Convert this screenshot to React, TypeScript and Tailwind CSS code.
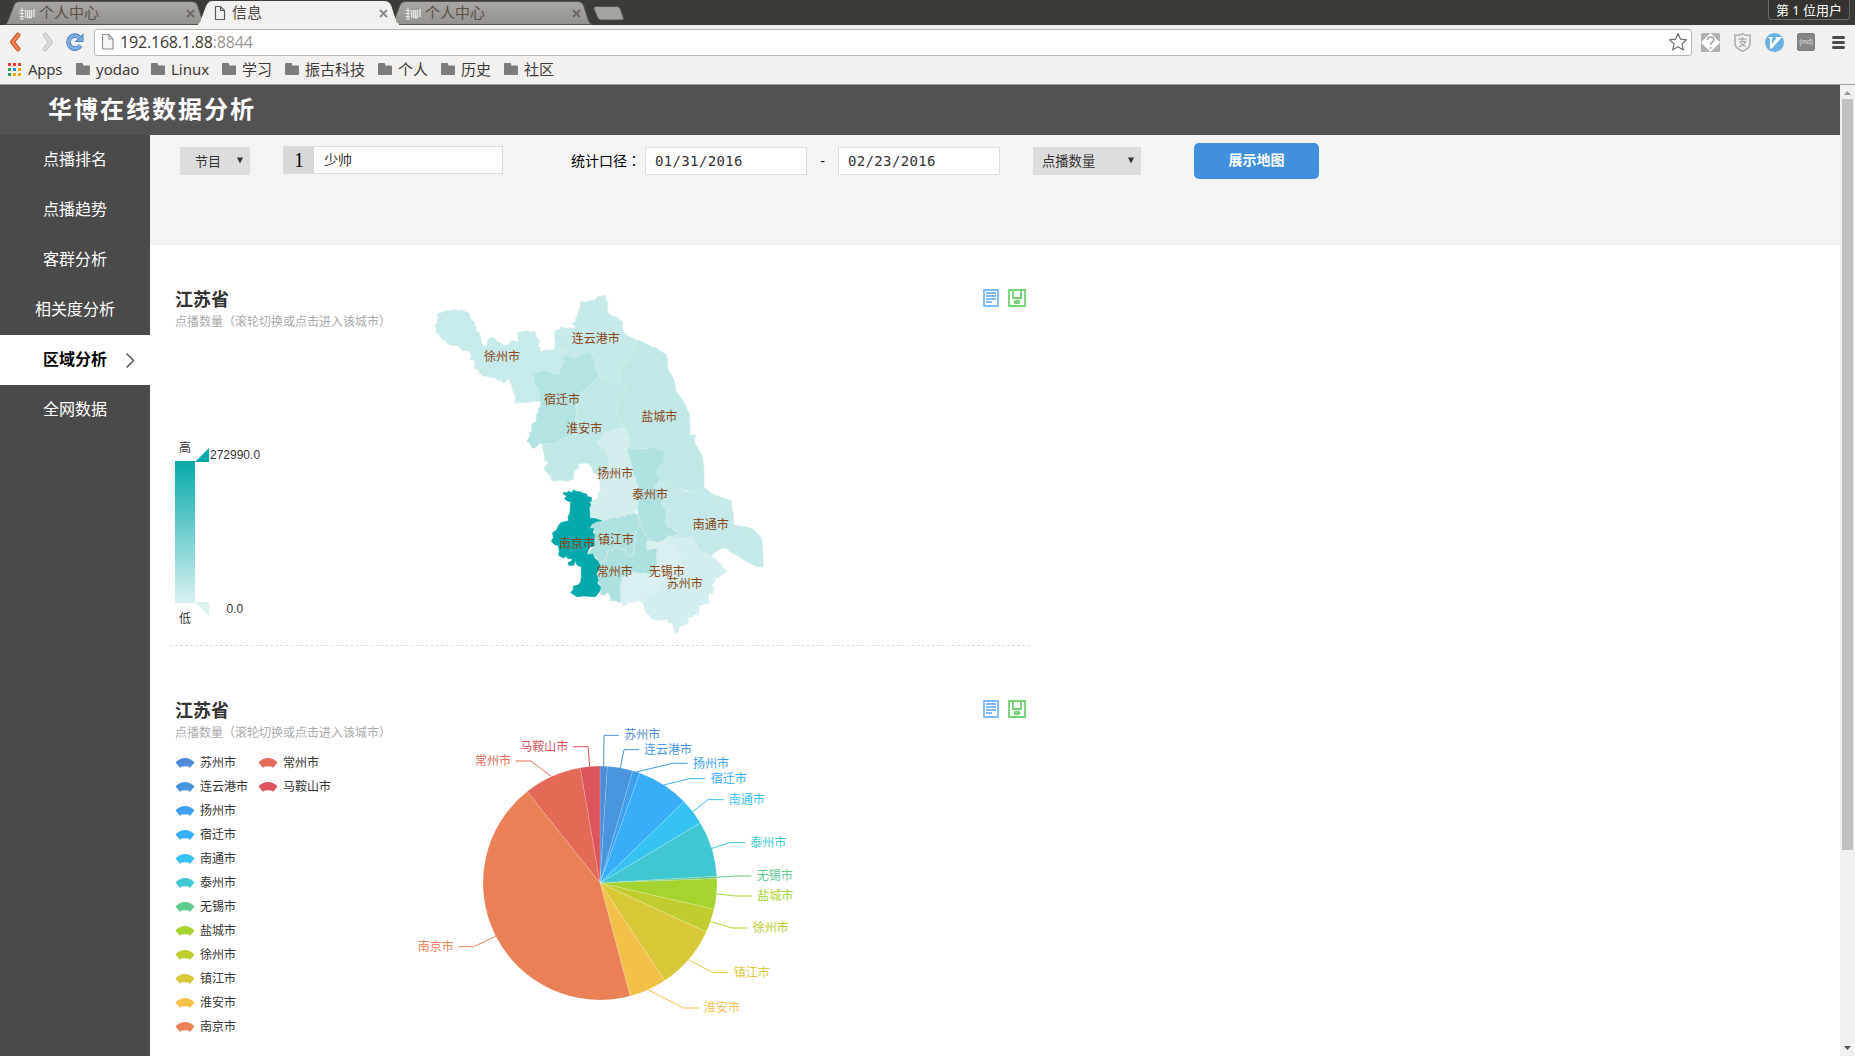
import React from 'react';

type Region = { fill: string; d: string };

const regions: Region[] = [
  { fill: '#c7ebea', d: 'M46,154 50,150 46,134 52,128 54,100 64,98 78,92 90,92 102,88 116,92 124,88 132,93 148,100 150,112 155,122 163,124 163,134 169,142 168,154 178,158 181,170 184,180 186,190 190,200 202,196 202,184 206,176 216,171 226,176 232,186 242,188 250,196 266,194 272,184 278,182 294,186 294,156 308,156 318,152 334,156 344,154 348,158 346,166 354,176 360,184 354,196 360,204 362,216 376,210 390,210 404,208 420,208 432,210 444,206 446,214 442,222 430,230 430,246 424,262 418,266 416,282 398,282 392,276 366,270 350,276 334,274 338,290 342,300 340,312 346,318 356,322 350,332 356,336 360,346 356,352 362,364 340,364 320,368 300,368 286,371 286,346 280,336 274,316 270,304 262,296 258,306 250,308 240,298 236,304 226,294 210,292 200,288 190,290 184,284 172,268 160,264 166,252 162,240 150,238 154,226 150,216 152,210 144,216 136,210 130,214 120,206 112,196 94,196 84,192 76,182 66,178 60,168Z' },
  { fill: '#c5eae9', d: 'M444,206 432,210 420,208 404,208 406,190 404,172 404,156 412,150 420,148 422,142 430,142 442,146 450,144 460,146 466,140 458,132 458,128 468,126 466,116 474,104 474,96 480,84 482,66 500,66 510,62 526,60 532,50 544,48 552,46 558,50 556,58 564,66 562,82 564,100 574,106 590,112 600,120 608,126 608,142 611,158 624,168 638,174 650,180 644,196 640,222 618,248 598,264 606,280 600,298 584,308 572,300 550,298 536,288 534,272 526,266 528,252 524,246 520,230 516,222 512,212 504,212 500,220 486,218 474,232 456,232 442,222Z' },
  { fill: '#b3e4e3', d: 'M442,222 456,232 474,232 486,218 500,220 504,212 512,212 516,222 520,230 524,246 528,252 526,266 534,272 536,288 518,312 500,326 480,340 474,366 468,380 470,400 466,420 470,440 462,466 430,474 404,494 380,490 368,494 360,490 350,500 340,506 334,502 328,490 320,484 330,466 326,458 336,456 334,432 348,424 350,400 356,396 354,386 360,380 362,364 356,352 360,346 356,336 350,332 356,322 346,318 340,312 342,300 338,290 334,274 350,276 366,270 392,276 398,282 416,282 418,266 424,262 430,246 430,230Z' },
  { fill: '#bfe8e7', d: 'M536,288 550,298 572,300 584,308 600,298 604,308 616,322 612,334 604,345 594,358 588,378 590,405 600,420 602,432 612,442 596,444 576,450 550,460 545,475 530,486 536,498 548,502 556,510 558,522 564,530 564,560 562,576 532,582 520,578 514,560 506,550 490,550 474,552 478,562 462,574 460,600 452,598 446,604 420,600 408,604 396,602 392,592 386,582 374,572 374,560 384,552 382,544 374,542 374,524 370,516 368,494 380,490 404,494 430,474 462,466 470,440 466,420 470,400 468,380 474,366 480,340 500,326 518,312Z' },
  { fill: '#bfe8e7', d: 'M650,180 664,184 680,192 694,200 710,204 726,216 740,224 742,240 744,268 756,288 764,304 768,332 780,350 794,370 802,390 808,400 810,430 810,466 816,464 828,466 824,478 826,492 840,514 848,532 852,570 852,622 840,628 826,634 800,632 780,624 762,628 750,614 744,608 718,610 712,596 712,580 716,560 732,550 732,510 712,508 700,500 680,506 660,506 638,510 628,496 630,480 622,462 612,442 602,432 600,420 590,405 588,378 594,358 604,345 612,334 616,322 604,308 600,298 606,280 598,264 618,248 640,222 644,196Z' },
  { fill: '#d3eeed', d: 'M612,442 614,452 624,452 624,466 630,480 628,496 622,512 630,540 636,560 640,584 648,590 648,606 656,620 652,640 656,656 652,680 644,698 630,704 618,704 614,712 604,706 600,714 580,712 556,720 544,722 528,716 514,716 510,700 512,684 508,662 518,660 532,658 536,648 534,640 542,634 540,610 538,594 530,582 562,576 564,560 564,530 558,522 556,510 548,502 536,498 530,486 545,475 550,460 576,450 596,444Z' },
  { fill: '#b0e2e2', d: 'M628,496 638,510 660,506 680,506 700,500 712,508 732,510 732,550 716,560 712,580 718,596 714,610 704,616 704,626 724,628 728,650 724,670 738,686 740,706 736,720 742,730 742,740 756,742 764,752 778,764 762,768 745,768 730,782 710,788 690,782 672,758 662,730 654,706 652,680 656,656 652,640 656,620 648,606 648,590 640,584 636,560 630,540 622,512Z' },
  { fill: '#c5e9e8', d: 'M704,626 704,616 718,610 738,606 750,614 762,628 780,624 800,636 812,632 826,634 840,628 852,622 866,632 880,644 910,654 934,662 936,684 940,700 940,734 956,738 976,740 996,746 1010,758 1024,774 1028,800 1030,862 1008,860 990,850 970,840 950,826 930,816 918,804 908,804 890,812 874,828 856,820 836,808 828,784 820,770 778,774 745,768 762,768 778,764 764,752 756,742 742,740 742,730 736,720 740,706 738,686 724,670 728,650 724,628Z' },
  { fill: '#d3eeee', d: 'M745,768 778,774 820,770 828,784 836,808 856,820 874,828 886,838 900,850 908,862 920,876 906,884 896,892 884,892 886,902 874,914 880,924 878,940 868,938 864,948 866,970 852,970 846,976 832,974 838,984 834,1006 822,1002 818,1010 800,1012 806,1022 802,1032 788,1036 778,1040 774,1056 768,1062 762,1050 758,1030 744,1028 742,1016 732,1020 720,1020 698,1018 688,1006 676,994 674,980 668,966 672,950 690,946 715,930 730,912 740,900 770,870 782,850 782,820 770,798 750,786Z' },
  { fill: '#daf0f0', d: 'M680,782 710,788 730,782 745,768 750,786 770,798 782,820 782,850 770,870 740,900 730,912 715,930 690,946 672,950 668,966 650,964 640,968 626,966 620,974 608,976 598,966 600,920 606,900 604,892 620,888 640,876 660,880 676,878 690,884 688,904 686,918 690,926 698,924 690,908 700,888 704,870 712,850 708,830 712,806 694,806 680,812Z' },
  { fill: '#daf0f0', d: 'M689,902 698,888 706,884 712,904 704,924 690,930 685,918Z' },
  { fill: '#aee2e1', d: 'M544,722 556,720 580,712 600,714 604,706 614,712 618,704 630,704 644,698 654,706 662,730 644,764 648,780 642,796 644,816 636,832 630,826 620,826 616,810 600,808 590,800 576,812 560,812 564,824 556,834 560,846 540,854 530,834 518,824 500,825 520,800 524,775 522,746 508,745 520,730Z' },
  { fill: '#ade1e0', d: 'M654,706 662,730 672,758 690,782 680,782 680,812 694,806 712,806 708,830 712,850 700,870 696,886 676,878 660,880 640,876 620,888 604,892 606,900 600,920 602,970 588,962 572,962 570,950 564,938 552,946 540,942 542,922 532,900 540,870 536,846 560,846 556,834 564,824 560,812 576,812 590,800 600,808 616,810 620,826 630,826 636,832 644,816 642,796 648,780 644,764 656,740Z' },
  { fill: '#06a9ab', d: 'M430,638 440,638 446,634 456,638 460,630 468,634 482,636 490,640 500,642 502,650 514,652 514,664 508,664 512,676 508,684 510,715 526,716 545,722 528,726 516,732 508,745 522,746 518,756 524,766 522,780 524,796 508,802 504,814 500,825 518,822 522,832 534,844 540,856 536,872 530,880 534,900 532,910 542,922 538,936 526,950 490,948 470,950 462,944 452,938 460,928 460,918 474,916 482,906 484,890 484,860 472,856 466,844 460,856 446,856 444,848 456,842 456,836 444,836 438,828 430,834 416,826 418,812 414,796 404,794 394,784 400,774 398,758 410,750 416,736 422,728 440,724 446,722 444,710 450,700 452,665 440,662 434,656 440,648 430,642Z' },
];

const mapLabels: [string, number, number][] = [
  ['徐州市', 192, 231], ['连云港市', 455, 177], ['宿迁市', 372, 360], ['淮安市', 439, 446], ['盐城市', 664, 411],
  ['扬州市', 532, 582], ['泰州市', 636, 645], ['南通市', 818, 734], ['南京市', 417, 792], ['镇江市', 534, 780],
  ['常州市', 530, 876], ['无锡市', 686, 876], ['苏州市', 740, 912],
];

type Slice = { name: string; color: string; end: number; line: string; x: number; y: number };

const slices: Slice[] = [
  { name: '苏州市', color: '#4f8bd6', end: 3.6, line: '611,169 612,76 657,76', x: 673, y: 75 },
  { name: '连云港市', color: '#4895dd', end: 16.3, line: '661,174 672,119 717,119', x: 732, y: 119 },
  { name: '扬州市', color: '#3d9fed', end: 19.9, line: '709,186 817,160 863,160', x: 879, y: 161 },
  { name: '宿迁市', color: '#38adf8', end: 45.9, line: '791,225 870,206 916,206', x: 932, y: 207 },
  { name: '南通市', color: '#36c3f1', end: 59.1, line: '878,305 924,269 971,269', x: 986, y: 269 },
  { name: '泰州市', color: '#40c7d2', end: 86.7, line: '936,415 989,398 1035,398', x: 1051, y: 398 },
  { name: '无锡市', color: '#61cb8f', end: 87.8, line: '950,502 1008,498 1054,498', x: 1070, y: 498 },
  { name: '盐城市', color: '#a5d330', end: 103, line: '950,552 1009,558 1055,558', x: 1072, y: 558 },
  { name: '徐州市', color: '#c1cd2f', end: 114.7, line: '932,635 996,654 1042,654', x: 1058, y: 654 },
  { name: '镇江市', color: '#d9c939', end: 146.4, line: '867,750 939,788 985,788', x: 1001, y: 788 },
  { name: '淮安市', color: '#f3c14a', end: 165.1, line: '744,839 850,894 896,894', x: 912, y: 894 },
  { name: '南京市', color: '#ea8055', end: 321.5, line: '287,679 221,710 175,710', x: 53, y: 711 },
  { name: '常州市', color: '#e36a57', end: 350.3, line: '454,199 393,153 347,153', x: 225, y: 153 },
  { name: '马鞍山市', color: '#dc545c', end: 360, line: '569,170 564,110 519,110', x: 361, y: 111 },
];

const point = (deg: number) => {
  const a = (deg * Math.PI) / 180;
  return `${200 + 117 * Math.sin(a)},${173 - 117 * Math.cos(a)}`;
};

function wedge(i: number) {
  const start = i === 0 ? 0 : slices[i - 1].end;
  const end = slices[i].end;
  return `M200,173 L${point(start)} A117,117 0 ${end - start > 180 ? 1 : 0} 1 ${point(end)} Z`;
}

function Tab({ title, active, wave }: { title: string; active?: boolean; wave?: boolean }) {
  return (
    <div className="relative -mr-[8px] h-[25px] w-[201px] shrink-0">
      <svg className="absolute inset-0" width="201" height="25" viewBox="0 0 201 25">
        <defs>
          <linearGradient id="tabGrey" x1="0" y1="0" x2="0" y2="1">
            <stop offset="0" stopColor="#a9a7a3" />
            <stop offset="1" stopColor="#94928f" />
          </linearGradient>
        </defs>
        <path
          d="M0,24.5 C2,24 3,21 4,18 L9,5 Q10.500,1.500 14,1.500 L187,1.500 Q191,1.500 192.500,5 L197,19 Q198,23.500 201,24.500 Z"
          fill={active ? '#f2f1f0' : 'url(#tabGrey)'}
          stroke={active ? '#f2f1f0' : '#55524c'}
          strokeWidth="1"
        />
      </svg>
      <div className="relative flex h-[25px] items-center pr-[10px] pl-[14px]">
        {wave ? (
          <svg width="16" height="16" viewBox="0 0 16 16" stroke="#e4e2df" fill="none">
            <path d="M.5 5.500h5M0 8.500h5M.5 11.500h4.500M1 14h4" strokeWidth="1" />
            <path d="M3 2.500v12M6.500 5v8" strokeWidth="1.300" />
            <path d="M8.500 5v7q1 1.500 2 0V5M10.500 12q1 1.500 2 0V5M15 4v8" strokeWidth="1.500" />
          </svg>
        ) : (
          <svg width="16" height="16" viewBox="0 0 16 16" fill="none" stroke="#5b5b5b" strokeWidth="1.2">
            <path d="M3.500 1.500h5l4 4v9h-9zM8.500 1.500v4h4" />
          </svg>
        )}
        <span className={`ml-[4px] flex-1 text-[15px] leading-[23px] ${active ? 'text-[#4a4742]' : 'text-[#5f5147]'}`}>{title}</span>
        <svg width="9" height="9" viewBox="0 0 9 9" className="mt-[2px] mr-[1px]" stroke={active ? '#8a8784' : '#6c6966'} strokeWidth="1.8">
          <path d="M1 1l7 7M8 1l-7 7" />
        </svg>
      </div>
    </div>
  );
}

function TabStrip() {
  return (
    <div className="flex h-[25px] items-start bg-[#3c3b37] pl-[5px]">
      <Tab title="个人中心" wave />
      <div className="relative z-10"><Tab title="信息" active /></div>
      <Tab title="个人中心" wave />
      <svg width="32" height="25" viewBox="0 0 32 25" className="ml-[9px]">
        <path d="M2 6.500h22q2.500 0 3.500 2.500l3 9q.5 2-1.500 2H8q-2.500 0-3.500-2.500L1 9q-.7-2.500 1-2.500z" fill="#a5a39f" stroke="#55524c" />
      </svg>
      <div className="mr-[5px] ml-auto flex h-[20px] w-[82px] items-center justify-center rounded-b-[4px] border border-t-0 border-[#6d6b66] bg-[#34332f] pt-[2px] font-['Noto_Sans','Noto_Sans_CJK_SC',sans-serif] text-[13px] whitespace-pre text-white">第 1 位用户</div>
    </div>
  );
}

function AddressBar() {
  return (
    <div className="flex h-[33px] items-center bg-[#f2f1f0] pt-[1px] pl-[8px]">
      <svg width="16" height="20" viewBox="0 0 16 20" fill="none" strokeLinecap="round" strokeLinejoin="round">
        <path d="M10 3L4.500 10l5.500 7" stroke="#b8502a" strokeWidth="4.600" />
        <path d="M10 3L4.500 10l5.500 7" stroke="#f58550" strokeWidth="2.800" />
      </svg>
      <svg width="16" height="20" viewBox="0 0 16 20" className="ml-[16px]" fill="none" strokeLinecap="round" strokeLinejoin="round">
        <path d="M5 3l5.500 7L5 17" stroke="#c4c2c0" strokeWidth="4.600" />
        <path d="M5 3l5.500 7L5 17" stroke="#dddbd9" strokeWidth="2.800" />
      </svg>
      <svg width="18" height="20" viewBox="0 0 18 20" className="ml-[10px]" fill="none">
        <path d="M14.500 13.500A6.500 6.500 0 1 1 13 5" stroke="#4f86bf" strokeWidth="4.600" />
        <path d="M17.500 1v9h-9z" fill="#4f86bf" />
        <path d="M14 13.500A6.300 6.300 0 1 1 13 5.500" stroke="#79aee0" strokeWidth="2.800" />
        <path d="M16.500 3.500v5.500h-5.500z" fill="#79aee0" />
      </svg>
      <div className="ml-[10px] flex h-[27px] w-[1598px] items-center rounded-[3px] border border-[#b9b6b2] bg-white pr-[3px] pl-[6px]">
        <svg width="14" height="18" viewBox="0 0 14 18" fill="#f6f6f6" stroke="#8f8f8f" strokeWidth="1.100">
          <path d="M1.500 1.500h6.500l4 4.500v10h-10.500zM8 1.500v4.500h4" />
        </svg>
        <span className="ml-[5px] flex-1 font-['Open_Sans',sans-serif] text-[16px] leading-[24px] tracking-[-0.180px] text-[#3a3632]">192.168.1.88<span className="text-[#9a9794]">:8844</span></span>
        <svg width="20" height="20" viewBox="0 0 20 20" fill="#fff" stroke="#706d6a" strokeWidth="1.200" strokeLinejoin="round">
          <path d="M10 1.500l2.500 5.700 6.100.6-4.600 4.100 1.300 6-5.300-3.100-5.300 3.100 1.300-6L1.400 7.800l6.100-.6z" />
        </svg>
      </div>
      <svg width="19" height="19" viewBox="0 0 19 19" className="ml-[9px]">
        <rect width="19" height="19" rx="1.500" fill="#b2b1b0" />
        <path d="M9.500 0L19 9.500 9.500 19 0 9.500z" fill="#fff" />
        <path d="M6.500 7q0-3 3.200-3t3 2.800q0 1.700-1.700 2.500-1.300.7-1.300 2.700M9.700 14v1.800" fill="none" stroke="#a5a4a3" strokeWidth="1.600" />
      </svg>
      <svg width="17" height="19" viewBox="0 0 17 19" className="ml-[14px]">
        <path d="M1 2q4 1 7.500-1.200Q12 3 16 2v9q0 4-7.500 7.200Q1 15 1 11z" fill="#f2f1f0" stroke="#b5b3b1" strokeWidth="1.700" />
        <path d="M4.500 6.200h8M8.500 4v4.500M5.500 8.700h6q-1.500 3.800-6.500 5M6 9.500q2.500 3.500 6 4" fill="none" stroke="#aaa8a6" strokeWidth="1.200" />
      </svg>
      <svg width="19" height="19" viewBox="0 0 19 19" className="ml-[14px]">
        <circle cx="9.500" cy="9.500" r="9.500" fill="#68b1e1" />
        <path d="M3.500 4h4.200v1.200h-.9v5.600L11.500 5.200h-1V4H17q-.2 1-1 1.200L7 15.500H5V5.200H3.500z" fill="#fff" />
      </svg>
      <div className="ml-[13px] flex h-[18px] w-[18px] items-center justify-center rounded-[2px] border border-[#7c7c7c] bg-[#868686] font-['Liberation_Sans',sans-serif] text-[7px] tracking-[-0.200px] text-[#dedede]">(md)</div>
      <div className="ml-[17px] flex w-[13px] flex-col gap-[2px]">
        <div className="h-[3px] rounded-full bg-[#4a4a4a]" />
        <div className="h-[3px] rounded-full bg-[#4a4a4a]" />
        <div className="h-[3px] rounded-full bg-[#4a4a4a]" />
      </div>
    </div>
  );
}

const dots = ['#ef3a36', '#ef3a36', '#ef3a36', '#2fa05a', '#2a8af0', '#f5a90e', '#2fa05a', '#f5a90e', '#f5a90e'];

const bookmarks: [string, string][] = [
  ['yodao', 'w-[43px]'], ['Linux', 'w-[39px]'], ['学习', 'w-[31px]'], ['振古科技', 'w-[61px]'],
  ['个人', 'w-[31px]'], ['历史', 'w-[31px]'], ['社区', 'w-[31px]'],
];

function Bookmarks() {
  return (
    <div className="flex h-[27px] items-center border-b border-[#a3a19f] bg-[#f2f1f0] pb-[4px] pl-[8px] font-['Noto_Sans','Noto_Sans_CJK_SC',sans-serif] text-[15px] leading-[22px] text-[#3c3a37]">
      <div className="grid grid-cols-3 gap-[2px]">
        {dots.map((c, i) => (
          <div key={i} className="h-[3px] w-[3px]" style={{ background: c }} />
        ))}
      </div>
      <span className="ml-[7px] w-[48px] tracking-[-0.300px]">Apps</span>
      {bookmarks.map(([name, w]) => (
        <div key={name} className="mr-[12px] flex items-center gap-[6px] whitespace-nowrap">
          <svg width="14" height="12" viewBox="0 0 14 12" fill="#7e7c7a"><path d="M0 1Q0 0 1 0h5q.8 0 1 .8L7.300 2.500H13q1 0 1 1V11q0 1-1 1H1q-1 0-1-1z" /></svg>
          <span className={w}>{name}</span>
        </div>
      ))}
    </div>
  );
}

const menu = ['点播排名', '点播趋势', '客群分析', '相关度分析', '区域分析', '全网数据'];

function Sidebar() {
  return (
    <nav className="w-[150px] shrink-0 bg-[#4a4a4a] text-[16px] text-white">
      {menu.map((item) =>
        item === '区域分析' ? (
          <div key={item} className="relative flex h-[50px] items-center justify-center bg-white pb-[1px] font-bold text-black">
            {item}
            <svg className="absolute top-[17px] right-[15px]" width="10" height="17" viewBox="0 0 10 17" fill="none" stroke="#555" strokeWidth="1.500"><path d="M1.500 1.500l7 7-7 7" /></svg>
          </div>
        ) : (
          <div key={item} className="flex h-[50px] items-center justify-center pb-[1px]">{item}</div>
        ),
      )}
    </nav>
  );
}

function Caret() {
  return (
    <svg width="6" height="7" viewBox="0 0 6 7" className="mb-[3px]" fill="#333"><path d="M0 .5h6L3 6.500z" /></svg>
  );
}

function Filters() {
  return (
    <div className="flex h-[110px] items-start bg-[#f4f4f4] pl-[30px] text-[#333]">
      <div className="mt-[12px] flex h-[28px] w-[70px] items-center bg-[#ddd] pt-[2px] pr-[7px] pl-[15px] text-[13px]">
        <span className="flex-1">节目</span>
        <Caret />
      </div>
      <div className="mt-[11px] ml-[33px] flex h-[28px] w-[220px] border border-[#ddd] bg-white">
        <div className="flex w-[30px] items-center justify-center bg-[#d8d8d8] font-['Liberation_Serif',serif] text-[20px] text-black">1</div>
        <div className="flex items-center pt-[1px] pl-[10px] text-[14px]">少帅</div>
      </div>
      <div className="mt-[12px] ml-[68px] flex h-[28px] w-[74px] items-center pb-[1px] font-['Noto_Sans_CJK_SC',sans-serif] text-[14px] whitespace-nowrap text-black">统计口径<span className="font-['Noto_Sans_CJK_TC',sans-serif]" lang="zh-TW">：</span></div>
      <div className="mt-[12px] flex h-[28px] w-[162px] items-center border border-[#ddd] bg-white pl-[9px] font-['DejaVu_Sans_Mono',monospace] text-[14px] tracking-[0.350px]">01/31/2016</div>
      <div className="mt-[12px] flex h-[28px] w-[31px] items-center justify-center text-[14px] text-black">-</div>
      <div className="mt-[12px] flex h-[28px] w-[162px] items-center border border-[#ddd] bg-white pl-[9px] font-['DejaVu_Sans_Mono',monospace] text-[14px] tracking-[0.350px]">02/23/2016</div>
      <div className="mt-[12px] ml-[33px] flex h-[28px] w-[108px] items-center bg-[#ddd] pt-[2px] pr-[7px] pl-[9px] text-[13.300px]">
        <span className="flex-1">点播数量</span>
        <Caret />
      </div>
      <div className="mt-[8px] ml-[53px] flex h-[36px] w-[125px] items-center justify-center rounded-[5px] bg-[#4090de] pb-[1px] text-[14px] font-bold text-white">展示地图</div>
    </div>
  );
}

function Heading() {
  return (
    <>
      <h2 className="h-[26px] text-[18px] leading-[26px] font-bold whitespace-nowrap text-[#333]">江苏省</h2>
      <p className="h-[18px] text-[12px] leading-[18px] whitespace-nowrap text-[#aaa]">点播数量（滚轮切换或点击进入该城市）</p>
    </>
  );
}

function Tools() {
  return (
    <div className="mt-[44px] ml-auto flex gap-[9px] pr-[4px]">
      <svg width="16" height="18" viewBox="0 0 16 18" fill="none" stroke="#7db9fb" strokeWidth="1.800">
        <path d="M1 1h14v16H1zM3 4h10M3 7h10M3 10h10M3 13h6" />
      </svg>
      <svg width="18" height="18" viewBox="0 0 18 18" fill="none" stroke="#73d273" strokeWidth="1.800">
        <path d="M1 1h16v16H1zM5 1v8h8V1" />
        <ellipse cx="9" cy="13" rx="2.500" ry="1.300" fill="#8dda8d" />
      </svg>
    </div>
  );
}

function VisualRange() {
  return (
    <svg className="mt-[104px] block" width="100" height="194" viewBox="0 0 100 194" fontSize="12" fill="#333">
      <defs>
        <linearGradient id="range" x1="0" y1="0" x2="0" y2="1">
          <stop offset="0" stopColor="#06a9ab" />
          <stop offset="1" stopColor="#d9f1f1" />
        </linearGradient>
      </defs>
      <text x="4" y="17">高</text>
      <rect x="0" y="26" width="20" height="142" fill="url(#range)" />
      <path d="M20 27L34 13v14z" fill="#06a9ab" />
      <path d="M20 167h14v14z" fill="#d9f1f1" />
      <text x="35" y="24">272990.0</text>
      <text x="51.500" y="178">0.0</text>
      <text x="4" y="188">低</text>
    </svg>
  );
}

function MapPanel() {
  return (
    <section className="flex h-[401px] w-[860px] border-b border-dashed border-[#ddd] pl-[5px]">
      <div className="w-[245px] shrink-0 pt-[42px]">
        <Heading />
        <VisualRange />
      </div>
      <svg className="mt-[35px]" width="360" height="360" viewBox="0 0 360 360">
        <g transform="scale(0.33333)" stroke="#cfedec" strokeWidth="2" strokeLinejoin="round">
          {regions.map((r, i) => (
            <path key={i} d={r.d} fill={r.fill} stroke={r.fill === '#06a9ab' || r.fill === '#daf0f0' ? r.fill : undefined} />
          ))}
        </g>
        <g fontSize="12" fill="#8b4513">
          {mapLabels.map(([name, x, y]) => (
            <text key={name} x={x / 3} y={Math.round(y / 3 + 3.9)}>{name}</text>
          ))}
        </g>
      </svg>
      <Tools />
    </section>
  );
}

function LegendItem({ slice }: { slice: Slice }) {
  return (
    <div className="flex h-[24px] w-[83px] items-center whitespace-nowrap">
      <svg width="20" height="10" viewBox="0 0 20 10" fill={slice.color}>
        <path d="M.5 4.500Q4.500 0 10 0t9.500 4.500L15 9.700Q13.800 8.300 10 8.300T5 9.700z" />
      </svg>
      <span className="ml-[5px] text-[12px] text-[#333]">{slice.name}</span>
    </div>
  );
}

function PiePanel() {
  return (
    <section className="flex h-[410px] w-[860px] pl-[5px]">
      <div className="w-[225px] shrink-0 pt-[52px]">
        <Heading />
        <div className="mt-[9px] flex h-[288px] w-[180px] flex-col flex-wrap content-start">
          {slices.map((s) => (
            <LegendItem key={s.name} slice={s} />
          ))}
        </div>
      </div>
      <svg className="mt-[64px]" width="420" height="320" viewBox="0 0 420 320">
        {slices.map((s, i) => (
          <path key={s.name} d={wedge(i)} fill={s.color} stroke="#fff" strokeOpacity="0.200" strokeWidth="0.800" />
        ))}
        <g transform="scale(0.33333)" fill="none" strokeWidth="3">
          {slices.map((s) => (
            <polyline key={s.name} points={s.line} stroke={s.color} />
          ))}
        </g>
        <g fontSize="12">
          {slices.map((s) => (
            <text key={s.name} x={s.x / 3} y={Math.round(s.y / 3 + 4.1)} fill={s.color}>{s.name}</text>
          ))}
        </g>
      </svg>
      <div className="mt-[10px] ml-auto"><Tools /></div>
    </section>
  );
}

function Scrollbar() {
  return (
    <div className="flex w-[15px] shrink-0 flex-col items-center bg-[#f1f1f1] py-[6px]">
      <svg width="7" height="4" viewBox="0 0 7 4" fill="#9a9a9a"><path d="M3.500 0L7 4H0z" /></svg>
      <div className="mt-[4px] h-[751px] w-[11px] bg-[#c1c1c1]" />
      <svg width="7" height="4" viewBox="0 0 7 4" className="mt-auto" fill="#505050"><path d="M0 0h7L3.500 4z" /></svg>
    </div>
  );
}

export default function App() {
  return (
    <div className="flex h-[1056px] w-[1855px] flex-col overflow-hidden bg-white font-['Liberation_Sans','Noto_Sans_CJK_SC',sans-serif]">
      <TabStrip />
      <AddressBar />
      <Bookmarks />
      <div className="flex min-h-0 flex-1">
        <div className="flex min-w-0 flex-1 flex-col">
          <header className="flex h-[50px] shrink-0 items-center bg-[#525252] pb-[1px] pl-[48px] text-[24px] font-bold tracking-[2px] text-white">华博在线数据分析</header>
          <div className="flex min-h-0 flex-1">
            <Sidebar />
            <main className="flex-1 bg-white">
              <Filters />
              <div className="pl-[20px]">
                <MapPanel />
                <PiePanel />
              </div>
            </main>
          </div>
        </div>
        <Scrollbar />
      </div>
    </div>
  );
}
